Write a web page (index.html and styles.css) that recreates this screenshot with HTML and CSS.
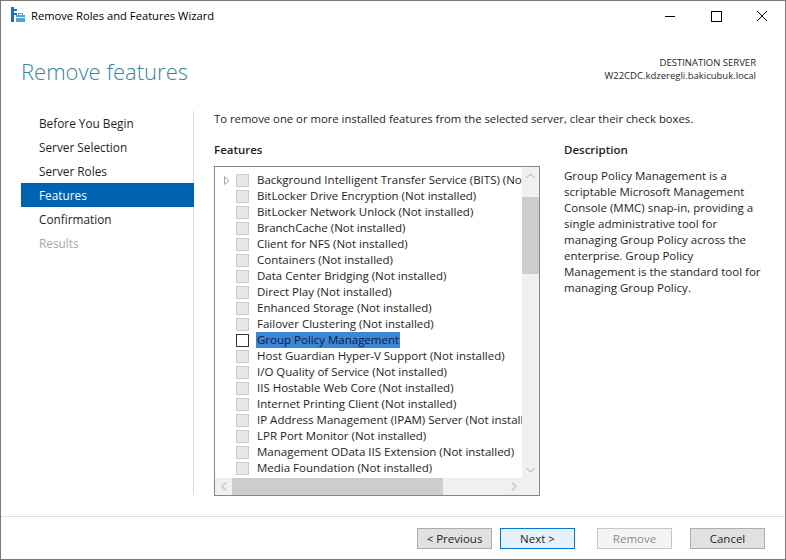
FILE: index.html
```html
<!DOCTYPE html>
<html>
<head>
<meta charset="utf-8">
<link rel="stylesheet" href="styles.css">
</head>
<body>
<div class="window">
  <div class="titlebar">
    <svg class="appicon" width="16" height="16" viewBox="0 0 16 16">
      <rect x="1" y="0" width="3" height="15" fill="#1f6fb5"/>
      <rect x="4" y="2" width="3" height="2" fill="#1f6fb5"/>
      <rect x="4" y="6" width="3" height="2" fill="#1f6fb5"/>
      <rect x="6" y="8" width="9" height="7" fill="#4aa3df"/>
      <rect x="8.5" y="6.5" width="4" height="2" fill="none" stroke="#4aa3df" stroke-width="1"/>
      <rect x="6" y="10" width="9" height="1" fill="#dff0fb"/>
    </svg>
    <span class="title">Remove Roles and Features Wizard</span>
    <div class="controls">
      <svg width="46" height="30" viewBox="0 0 46 30"><line x1="18" y1="15.5" x2="28" y2="15.5" stroke="#000" stroke-width="1"/></svg>
      <svg width="46" height="30" viewBox="0 0 46 30"><rect x="18.5" y="10.5" width="10" height="10" fill="none" stroke="#000" stroke-width="1"/></svg>
      <svg width="46" height="30" viewBox="0 0 46 30"><path d="M18 10 L28 20 M28 10 L18 20" stroke="#000" stroke-width="1"/></svg>
    </div>
  </div>

  <div class="header">
    <h1 class="heading">Remove features</h1>
    <div class="dest">
      <div>DESTINATION SERVER</div>
      <div>W22CDC.kdzeregli.bakicubuk.local</div>
    </div>
  </div>

  <div class="body">
    <nav class="nav">
      <div class="nav-item">Before You Begin</div>
      <div class="nav-item">Server Selection</div>
      <div class="nav-item">Server Roles</div>
      <div class="nav-item active">Features</div>
      <div class="nav-item">Confirmation</div>
      <div class="nav-item disabled">Results</div>
    </nav>

    <main class="main">
      <p class="intro">To remove one or more installed features from the selected server, clear their check boxes.</p>
      <div class="columns">
        <section class="features">
          <div class="label">Features</div>
          <div class="listbox">
            <div class="rows">
              <div class="row"><span class="exp"><svg width="6" height="9" viewBox="0 0 6 9"><path d="M0.5 0.5 L5 4.5 L0.5 8.5 Z" fill="none" stroke="#a6a6a6" stroke-width="1"/></svg></span><span class="cb"></span><span class="txt">Background Intelligent Transfer Service (BITS) (Not installed)</span></div>
              <div class="row"><span class="exp"></span><span class="cb"></span><span class="txt">BitLocker Drive Encryption (Not installed)</span></div>
              <div class="row"><span class="exp"></span><span class="cb"></span><span class="txt">BitLocker Network Unlock (Not installed)</span></div>
              <div class="row"><span class="exp"></span><span class="cb"></span><span class="txt">BranchCache (Not installed)</span></div>
              <div class="row"><span class="exp"></span><span class="cb"></span><span class="txt">Client for NFS (Not installed)</span></div>
              <div class="row"><span class="exp"></span><span class="cb"></span><span class="txt">Containers (Not installed)</span></div>
              <div class="row"><span class="exp"></span><span class="cb"></span><span class="txt">Data Center Bridging (Not installed)</span></div>
              <div class="row"><span class="exp"></span><span class="cb"></span><span class="txt">Direct Play (Not installed)</span></div>
              <div class="row"><span class="exp"></span><span class="cb"></span><span class="txt">Enhanced Storage (Not installed)</span></div>
              <div class="row"><span class="exp"></span><span class="cb"></span><span class="txt">Failover Clustering (Not installed)</span></div>
              <div class="row"><span class="exp"></span><span class="cb on"></span><span class="txt sel">Group Policy Management</span></div>
              <div class="row"><span class="exp"></span><span class="cb"></span><span class="txt">Host Guardian Hyper-V Support (Not installed)</span></div>
              <div class="row"><span class="exp"></span><span class="cb"></span><span class="txt">I/O Quality of Service (Not installed)</span></div>
              <div class="row"><span class="exp"></span><span class="cb"></span><span class="txt">IIS Hostable Web Core (Not installed)</span></div>
              <div class="row"><span class="exp"></span><span class="cb"></span><span class="txt">Internet Printing Client (Not installed)</span></div>
              <div class="row"><span class="exp"></span><span class="cb"></span><span class="txt">IP Address Management (IPAM) Server (Not installed)</span></div>
              <div class="row"><span class="exp"></span><span class="cb"></span><span class="txt">LPR Port Monitor (Not installed)</span></div>
              <div class="row"><span class="exp"></span><span class="cb"></span><span class="txt">Management OData IIS Extension (Not installed)</span></div>
              <div class="row"><span class="exp"></span><span class="cb"></span><span class="txt">Media Foundation (Not installed)</span></div>
            </div>
            <div class="vscroll">
              <span class="arrow"><svg width="9" height="6" viewBox="0 0 9 6"><path d="M0.5 5 L4.5 1 L8.5 5" fill="none" stroke="#a3a3a3" stroke-width="1"/></svg></span>
              <div class="vtrack"><div class="vthumb"></div></div>
              <span class="arrow"><svg width="9" height="6" viewBox="0 0 9 6"><path d="M0.5 1 L4.5 5 L8.5 1" fill="none" stroke="#a3a3a3" stroke-width="1"/></svg></span>
            </div>
            <div class="hscroll">
              <span class="harrow"><svg width="6" height="9" viewBox="0 0 6 9"><path d="M5 0.5 L1 4.5 L5 8.5" fill="none" stroke="#a3a3a3" stroke-width="1"/></svg></span>
              <div class="htrack"><div class="hthumb"></div></div>
              <span class="harrow"><svg width="6" height="9" viewBox="0 0 6 9"><path d="M1 0.5 L5 4.5 L1 8.5" fill="none" stroke="#a3a3a3" stroke-width="1"/></svg></span>
            </div>
            <div class="corner"></div>
          </div>
        </section>
        <aside class="desc">
          <div class="label">Description</div>
          <p class="desc-text">Group Policy Management is a scriptable Microsoft Management Console (MMC) snap-in, providing a single administrative tool for managing Group Policy across the enterprise. Group Policy Management is the standard tool for managing Group Policy.</p>
        </aside>
      </div>
    </main>
  </div>

  <div class="footer">
    <button class="btn">&lt; Previous</button>
    <button class="btn default">Next &gt;</button>
    <button class="btn disabled gap">Remove</button>
    <button class="btn gap2">Cancel</button>
  </div>
</div>
</body>
</html>
```

FILE: styles.css
```css
* { box-sizing: border-box; }
html, body { margin: 0; padding: 0; background: #fff; }
body {
  font-family: "Open Sans", "Noto Sans", sans-serif;
  font-size: 11.5px;
  color: #1e1e1e;
}
.window {
  width: 786px;
  height: 560px;
  border: 1px solid #7a7a7a;
  display: flex;
  flex-direction: column;
  background: #fff;
  overflow: hidden;
}
.titlebar {
  height: 30px;
  display: flex;
  align-items: center;
  flex: none;
  padding-bottom: 2px;
}
.appicon { margin-left: 9px; margin-right: 5px; }
.title { font-size: 11.2px; color: #000; }
.controls { margin-left: auto; display: flex; margin-top: 2px; }
.controls svg { display: block; }

.header {
  height: 80px;
  flex: none;
  display: flex;
  justify-content: space-between;
  padding: 0 29px 0 20px;
}
.heading {
  margin: 25px 0 0 0;
  font-size: 22px;
  line-height: 30px;
  font-weight: 300;
  color: #3585a0;
}
.dest {
  margin-top: 25px;
  text-align: right;
  font-size: 9.5px;
  line-height: 13px;
  color: #1e1e1e;
}

.body {
  flex: 1;
  display: flex;
  min-height: 0;
}
.nav {
  margin-left: 20px;
  width: 173px;
  border-right: 1px solid #d9d9d9;
  margin-bottom: 21px;
  flex: none;
  font-size: 11.8px;
}
.nav-item {
  height: 24px;
  line-height: 24px;
  padding-left: 18px;
  color: #1e1e1e;
}
.nav-item.active { background: #0063b1; color: #fff; margin-right: -1px; }
.nav-item.disabled { color: #a8a8a8; }

.main {
  padding-left: 20px;
  flex: 1;
}
.intro {
  margin: 0;
  line-height: 16px;
  font-size: 11.3px;
}
.columns {
  display: flex;
  gap: 24px;
  margin-top: 15px;
}
.features { width: 326px; flex: none; }
.label {
  font-weight: 600;
  line-height: 16px;
}
.listbox {
  margin-top: 8px;
  height: 330px;
  border: 1px solid #828790;
  display: grid;
  grid-template-columns: 1fr 17px;
  grid-template-rows: 1fr 17px;
  overflow: hidden;
}
.rows {
  padding-top: 5px;
  overflow: hidden;
  min-width: 0;
}
.row {
  height: 16px;
  display: flex;
  align-items: center;
  white-space: nowrap;
  padding-left: 9px;
}
.exp {
  width: 12px;
  flex: none;
  display: flex;
  align-items: center;
}
.exp svg { display: block; }
.cb {
  width: 13px;
  height: 13px;
  flex: none;
  background: #e6e6e6;
  border: 1px solid #cccccc;
  margin-right: 8px;
}
.cb.on { background: #fff; border-color: #333; }
.txt { line-height: 16px; }
.txt.sel { background: #3b86d8; color: #0d1a3a; padding: 0 1px; margin-left: -1px; }

.vscroll {
  background: #f0f0f0;
  display: flex;
  flex-direction: column;
}
.arrow {
  height: 17px;
  flex: none;
  display: flex;
  align-items: center;
  justify-content: center;
}
.arrow svg, .harrow svg { display: block; }
.vtrack { flex: 1; }
.vthumb {
  margin-top: 13px;
  height: 77px;
  background: #cdcdcd;
}
.hscroll {
  background: #f0f0f0;
  display: flex;
}
.harrow {
  width: 17px;
  flex: none;
  display: flex;
  align-items: center;
  justify-content: center;
}
.htrack { flex: 1; }
.hthumb {
  height: 100%;
  width: 211px;
  background: #cdcdcd;
}
.corner { background: #f0f0f0; }

.desc { width: 200px; flex: none; }
.desc-text {
  margin: 10px 0 0 0;
  line-height: 16px;
}

.footer {
  height: 43px;
  flex: none;
  border-top: 1px solid #dfdfdf;
  display: flex;
  justify-content: flex-end;
  padding: 11px 20px 0 0;
}
.btn {
  width: 75px;
  height: 21px;
  font-family: inherit;
  font-size: 11.5px;
  background: #e1e1e1;
  border: 1px solid #adadad;
  color: #1e1e1e;
  padding: 0;
  margin-left: 8px;
}
.btn.default { border-color: #0078d7; background: #e5f1fb; }
.btn.disabled { background: #f4f4f4; border-color: #c6c6c6; color: #8a8a8a; }
.btn.gap { margin-left: 22px; }
.btn.gap2 { margin-left: 18px; }
```
